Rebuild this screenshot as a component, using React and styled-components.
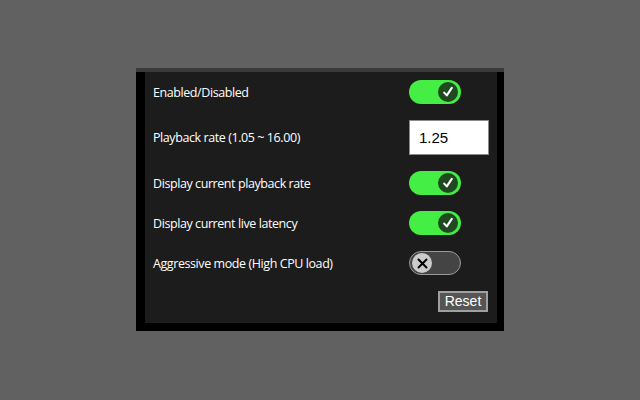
import styled, { createGlobalStyle } from "styled-components";

const Global = createGlobalStyle`
  html, body {
    margin: 0;
    height: 100%;
    background: #616161;
  }
  #root {
    height: 100%;
  }
`;

const Page = styled.div`
  height: 400px;
  display: flex;
  justify-content: center;
  align-items: flex-start;
  padding-top: 68px;
  box-sizing: border-box;
`;

const Frame = styled.div`
  width: 368px;
  background: #000;
  border-top: 4px solid #3b3b3b;
  padding: 0 7px 8px 9px;
  box-sizing: border-box;
`;

const Panel = styled.div`
  background: #1c1c1c;
  padding: 8px 9px 11px 8px;
  display: flex;
  flex-direction: column;
  gap: 16px;
  font-family: "Open Sans", "Noto Sans", sans-serif;
`;

const Row = styled.div`
  display: grid;
  grid-template-columns: 256px 1fr;
  align-items: center;
`;

const Label = styled.span`
  color: #fff;
  font-size: 12.5px;
  letter-spacing: -0.42px;
`;

const Track = styled.div`
  width: 52px;
  height: 24px;
  box-sizing: border-box;
  border-radius: 12px;
  background: ${(p) => (p.$on ? "#44ee44" : "#444444")};
  border: ${(p) => (p.$on ? "none" : "1px solid #9a9a9a")};
  display: flex;
  align-items: center;
  justify-content: ${(p) => (p.$on ? "flex-end" : "flex-start")};
  padding: 0 3px 0 ${(p) => (p.$on ? "3px" : "2px")};
`;

const Knob = styled.div`
  width: 20px;
  height: 20px;
  border-radius: 50%;
  background: ${(p) => (p.$on ? "#1f4a1f" : "#cccccc")};
  display: flex;
  align-items: center;
  justify-content: center;
`;

const Input = styled.input`
  width: 80px;
  height: 35px;
  box-sizing: border-box;
  border: 1px solid #8a8a8a;
  background: #fff;
  color: #000;
  font-family: "Liberation Sans", Arial, sans-serif;
  font-size: 15px;
  padding: 0 0 0 9px;
  outline: none;
`;

const Footer = styled.div`
  display: flex;
  justify-content: flex-end;
`;

const Button = styled.button`
  width: 50px;
  height: 21px;
  box-sizing: border-box;
  background: #555555;
  color: #fff;
  border: 2px solid #a0a0a0;
  font-family: "Liberation Sans", Arial, sans-serif;
  font-size: 14px;
  padding: 0;
  line-height: 17px;
`;

function Toggle({ on }) {
  return (
    <Track $on={on}>
      <Knob $on={on}>
        {on ? (
          <svg width="12" height="12" viewBox="0 0 12 12">
            <path d="M2.2 6.6 L4.8 9.4 L9.8 1.8" fill="none" stroke="#fff" strokeWidth="2.1" strokeLinecap="round" strokeLinejoin="round" />
          </svg>
        ) : (
          <svg width="11" height="11" viewBox="0 0 11 11">
            <path d="M1.5 1.5 L9.5 9.5 M9.5 1.5 L1.5 9.5" stroke="#000" strokeWidth="2" strokeLinecap="round" />
          </svg>
        )}
      </Knob>
    </Track>
  );
}

const options = [
  { label: "Enabled/Disabled", on: true },
  { label: "Playback rate (1.05 ~ 16.00)", input: "1.25" },
  { label: "Display current playback rate", on: true },
  { label: "Display current live latency", on: true },
  { label: "Aggressive mode (High CPU load)", on: false },
];

export default function App() {
  return (
    <>
      <Global />
      <Page>
        <Frame>
          <Panel>
            {options.map((o) => (
              <Row key={o.label}>
                <Label>{o.label}</Label>
                {o.input ? <Input defaultValue={o.input} /> : <Toggle on={o.on} />}
              </Row>
            ))}
            <Footer>
              <Button>Reset</Button>
            </Footer>
          </Panel>
        </Frame>
      </Page>
    </>
  );
}
